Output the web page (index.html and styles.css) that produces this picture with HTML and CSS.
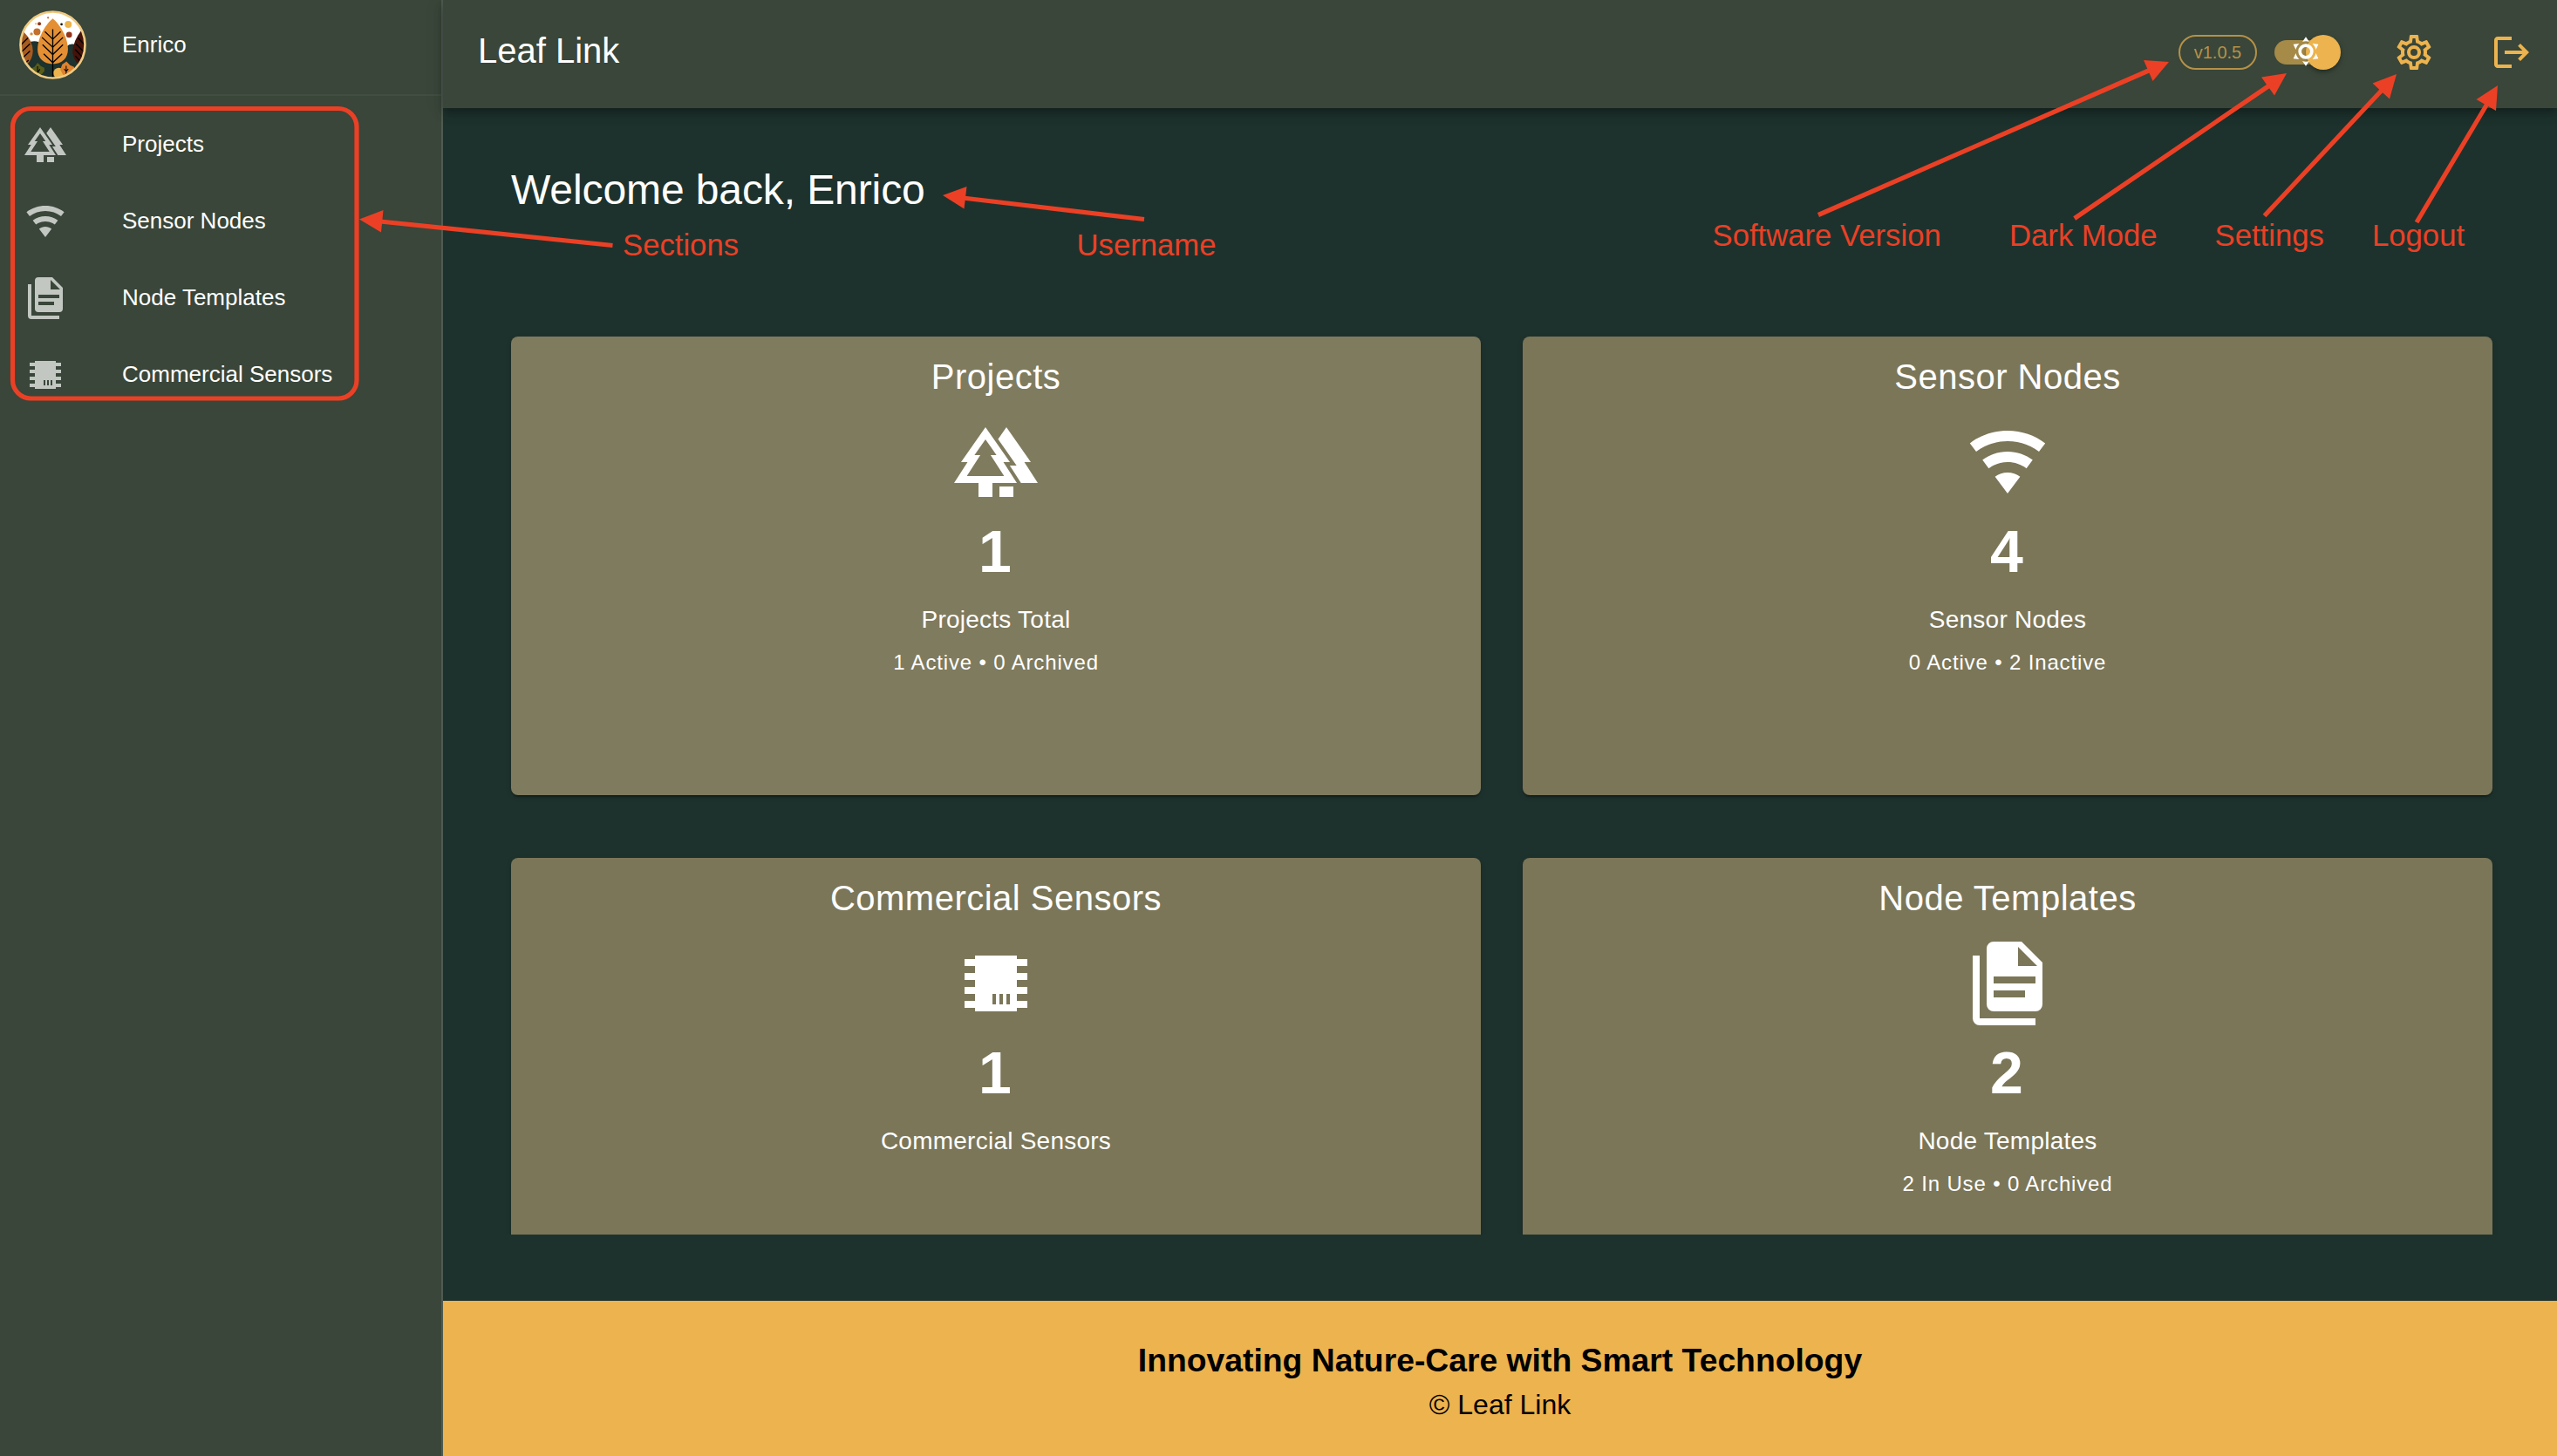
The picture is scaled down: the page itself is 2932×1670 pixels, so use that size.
FILE: index.html
```html
<!DOCTYPE html>
<html lang="en">
<head>
<meta charset="utf-8">
<title>Leaf Link</title>
<link rel="stylesheet" href="styles.css">
</head>
<body>
<svg class="defs" width="0" height="0" aria-hidden="true">
  <symbol id="forest" viewBox="0 0 24 24"><path d="M16 12 9 2 2 12h1.86L0 18h7v4h4v-4h7l-3.86-6H16zM3.66 16l3.86-6H5.84L9 5.49 12.16 10h-1.68l3.86 6H3.66z"/><path d="M20.14 12H22L15 2l-2.39 3.41L17.92 13h-1.95l3.22 5H24l-3.86-6z"/><path d="M13 19h4v3h-4z"/></symbol>
  <symbol id="wifi" viewBox="0 0 24 24"><path d="M12 21L15.6 16.2C14.6 15.45 13.35 15 12 15S9.4 15.45 8.4 16.2L12 21M12 3C7.95 3 4.21 4.34 1.2 6.6L3 9C5.5 7.12 8.62 6 12 6S18.5 7.12 21 9L22.8 6.6C19.79 4.34 16.05 3 12 3M12 9C9.3 9 6.81 9.89 4.8 11.4L6.6 13.8C8.1 12.67 9.97 12 12 12S15.9 12.67 17.4 13.8L19.2 11.4C17.19 9.89 14.7 9 12 9Z"/></symbol>
  <symbol id="docs" viewBox="0 0 24 24"><path fill-rule="evenodd" d="M8 0H16L22 6V18A2 2 0 0 1 20 20H8A2 2 0 0 1 6 18V2A2 2 0 0 1 8 0ZM15 1.5V7H20.5ZM8 10V12H20V10ZM8 14V16H17V14Z"/><path d="M2 4H4V22H20V24H4A2 2 0 0 1 2 22Z"/></symbol>
  <symbol id="chip" viewBox="0 0 24 24"><path fill-rule="evenodd" d="M6 4H18V5H21V7H18V9H21V11H18V13H21V15H18V17H21V19H18V20H6V19H3V17H6V15H3V13H6V11H3V9H6V7H3V5H6ZM11 15V18H12V15ZM13 15V18H14V15ZM15 15V18H16V15Z"/></symbol>
</svg>

<div class="app">
  <nav class="sidebar">
    <div class="user">
      <svg class="avatar" viewBox="66 35 230 238" preserveAspectRatio="none">
        <defs><clipPath id="face"><ellipse cx="181" cy="154" rx="110" ry="114"/></clipPath></defs>
        <g clip-path="url(#face)">
          <path fill="#fff" d="M66 35h230v238H66z"/>
          <path fill="#1e322e" d="M66 175Q100 130 135 145L228 160Q240 146 262 154L296 190V273H66z"/>
          <path fill="#a65b21" d="M80 107Q113 140 113 175Q112 205 92 222L60 215V107z"/>
          <path fill="#451209" d="M280 102Q248 145 249 180Q252 205 270 222L300 215V102z"/>
          <path fill="#e48f33" d="M181 63C160 80 129 125 129 170C129 200 150 220 181 220C212 220 233 200 233 170C233 125 202 80 181 63z"/>
          <path fill="#565c19" d="M129 216L140 227L152 233L153 244L144 255L129 262L112 256L106 236L119 229z"/>
          <circle cx="202" cy="252" r="19" fill="#edb34c"/>
          <path fill="#dd822e" d="M228 211L240 224L254 230L255 245L240 260L216 257L207 240L213 222z"/>
          <g fill="none" stroke="#000" stroke-width="4">
            <path d="M181 100V270"/>
            <path d="M154 108L181 134L208 108M144 128L181 162L216 128M146 153L181 187L216 153M150 185L181 215L213 185"/>
            <path d="M96 130L74 152M103 150L74 178M103 175L76 201M98 207L86 218M268 130L292 156M260 150L290 180M258 170L284 198M258 192L276 212"/>
            <path d="M129 228V256M129 250L137 238M227 226V256M220 237L227 246L234 237" stroke-width="3"/>
          </g>
          <circle cx="234" cy="83" r="12" fill="#edb34c"/><circle cx="237" cy="119" r="10" fill="#94351a"/>
          <circle cx="127" cy="109" r="12" fill="#c3702c"/><circle cx="135" cy="81" r="6" fill="#94351a"/>
          <circle cx="108" cy="116" r="5" fill="#d98a3a"/><circle cx="123" cy="81" r="3" fill="#edb34c"/>
          <circle cx="165" cy="60" r="3.5" fill="#c3702c"/><circle cx="211" cy="83" r="4" fill="#111"/>
        </g>
        <ellipse cx="181" cy="154" rx="110.5" ry="114.5" fill="none" stroke="#efca81" stroke-width="8"/>
      </svg>
      <span>Enrico</span>
    </div>
    <ul class="menu">
      <li><svg><use href="#forest"/></svg><span>Projects</span></li>
      <li><svg><use href="#wifi"/></svg><span>Sensor Nodes</span></li>
      <li><svg><use href="#docs"/></svg><span>Node Templates</span></li>
      <li><svg><use href="#chip"/></svg><span>Commercial Sensors</span></li>
    </ul>
  </nav>

  <div class="page">
    <header class="topbar">
      <h1>Leaf Link</h1>
      <div class="actions">
        <span class="version">v1.0.5</span>
        <span class="switch">
          <span class="thumb"></span>
          <svg class="sun" viewBox="0 0 24 24"><path fill-rule="evenodd" d="M12 6.8A5.2 5.2 0 0 1 12 17.2A5.2 5.2 0 0 1 12 6.8M12 9A3 3 0 0 0 12 15A3 3 0 0 0 12 9"/><path d="M12,2L14.39,5.42C13.65,5.15 12.84,5 12,5C11.16,5 10.35,5.15 9.61,5.42L12,2M3.34,7L7.5,6.65C6.9,7.16 6.36,7.78 5.94,8.5C5.5,9.24 5.25,10 5.11,10.79L3.34,7M3.36,17L5.12,13.23C5.26,14 5.53,14.78 5.95,15.5C6.37,16.24 6.91,16.86 7.5,17.37L3.36,17M20.65,7L18.88,10.79C18.74,10 18.47,9.23 18.05,8.5C17.63,7.78 17.1,7.15 16.5,6.64L20.65,7M20.64,17L16.5,17.36C17.09,16.85 17.62,16.22 18.04,15.5C18.46,14.77 18.73,14 18.87,13.21L20.64,17M12,22L9.59,18.56C10.33,18.83 11.14,19 12,19C12.82,19 13.63,18.83 14.37,18.56L12,22Z"/></svg>
        </span>
        <svg class="icon gear" viewBox="0 0 24 24"><path d="M12,8A4,4 0 0,1 16,12A4,4 0 0,1 12,16A4,4 0 0,1 8,12A4,4 0 0,1 12,8M12,10A2,2 0 0,0 10,12A2,2 0 0,0 12,14A2,2 0 0,0 14,12A2,2 0 0,0 12,10M10,22C9.75,22 9.54,21.82 9.5,21.58L9.13,18.93C8.5,18.68 7.96,18.34 7.44,17.94L4.95,18.95C4.73,19.03 4.46,18.95 4.34,18.73L2.34,15.27C2.21,15.05 2.27,14.78 2.46,14.63L4.57,12.97L4.5,12L4.57,11L2.46,9.37C2.27,9.22 2.21,8.95 2.34,8.73L4.34,5.27C4.46,5.05 4.73,4.96 4.95,5.05L7.44,6.05C7.96,5.66 8.5,5.32 9.13,5.07L9.5,2.42C9.54,2.18 9.75,2 10,2H14C14.25,2 14.46,2.18 14.5,2.42L14.87,5.07C15.5,5.32 16.04,5.66 16.56,6.05L19.05,5.05C19.27,4.96 19.54,5.05 19.66,5.27L21.66,8.73C21.79,8.95 21.73,9.22 21.54,9.37L19.43,11L19.5,12L19.43,13L21.54,14.63C21.73,14.78 21.79,15.05 21.66,15.27L19.66,18.73C19.54,18.95 19.27,19.04 19.05,18.95L16.56,17.95C16.04,18.34 15.5,18.68 14.87,18.93L14.5,21.58C14.46,21.82 14.25,22 14,22H10M11.25,4L10.88,6.61C9.68,6.86 8.62,7.5 7.85,8.39L5.44,7.35L4.69,8.65L6.8,10.2C6.4,11.37 6.4,12.64 6.8,13.8L4.68,15.36L5.43,16.66L7.86,15.62C8.63,16.5 9.68,17.14 10.87,17.38L11.24,20H12.76L13.13,17.39C14.32,17.14 15.37,16.5 16.14,15.62L18.57,16.66L19.32,15.36L17.2,13.81C17.6,12.64 17.6,11.37 17.2,10.2L19.31,8.65L18.56,7.35L16.15,8.39C15.38,7.5 14.32,6.86 13.12,6.62L12.75,4H11.25Z"/></svg>
        <svg class="icon logout" viewBox="0 0 24 24"><path d="M17 7l-1.41 1.41L18.17 11H8v2h10.17l-2.58 2.58L17 17l5-5M4 5h8V3H4c-1.1 0-2 .9-2 2v14c0 1.1.9 2 2 2h8v-2H4V5z"/></svg>
      </div>
    </header>

    <main class="content">
      <h2>Welcome back, Enrico</h2>
      <section class="cards">
        <article class="card active">
          <h3>Projects</h3><svg><use href="#forest"/></svg>
          <strong>1</strong><p>Projects Total</p><small>1 Active • 0 Archived</small>
        </article>
        <article class="card">
          <h3>Sensor Nodes</h3><svg><use href="#wifi"/></svg>
          <strong>4</strong><p>Sensor Nodes</p><small>0 Active • 2 Inactive</small>
        </article>
        <article class="card">
          <h3>Commercial Sensors</h3><svg><use href="#chip"/></svg>
          <strong>1</strong><p>Commercial Sensors</p>
        </article>
        <article class="card">
          <h3>Node Templates</h3><svg><use href="#docs"/></svg>
          <strong>2</strong><p>Node Templates</p><small>2 In Use • 0 Archived</small>
        </article>
      </section>
    </main>

    <footer class="footer">
      <b>Innovating Nature-Care with Smart Technology</b>
      <span>© Leaf Link</span>
    </footer>
  </div>
</div>

<!-- Callouts drawn over the interface -->
<svg class="callouts" viewBox="0 0 2932 1670">
  <rect x="14.5" y="124.5" width="394.5" height="332.5" rx="21"/>
  <path class="line" d="M702.5 281.5L436 254M1312 251.5L1104 227M2085 246.5L2466 80M2378.7 250.5L2603 97.5M2596.5 247.5L2732 102.5M2771 255L2852 119"/>
  <path class="head" d="M412 251.5L439.5 241L437 266.5ZM1081 224L1108.5 214L1105.5 239.5ZM2487 71L2458 69L2468.5 93ZM2622 84L2593 88.5L2608 109.5ZM2748 85L2720.5 95.5L2740 113.5ZM2864 98L2839.5 114L2862 127Z"/>
  <text x="714" y="292.5">Sections</text>
  <text x="1234.5" y="292.5">Username</text>
  <text x="1963.5" y="282">Software Version</text>
  <text x="2304" y="282">Dark Mode</text>
  <text x="2539.500" y="282">Settings</text>
  <text x="2720" y="281.500">Logout</text>
</svg>
</body>
</html>
```

FILE: styles.css
```css
* { box-sizing: border-box; }

body {
  margin: 0;
  background: #1e322d;
  color: #fff;
  font-family: "Liberation Sans", Arial, Helvetica, sans-serif;
}

h1, h2, h3, p, ul { margin: 0; padding: 0; font-weight: 400; }

.defs { position: absolute; }

.app { display: flex; width: 2932px; height: 1670px; overflow: hidden; }

/* Sidebar */
.sidebar {
  flex: none;
  width: 508px;
  background: #394639;
  border-right: 2px solid #4f5b51;
  font-size: 26px;
}
.user {
  display: flex;
  align-items: center;
  height: 110px;
  padding: 0 0 6px 22px;
  border-bottom: 2px solid #434e43;
}
.avatar { width: 77px; height: 79px; margin-right: 41px; }
.menu { padding-top: 12px; list-style: none; }
.menu li { display: flex; align-items: center; height: 88px; padding-left: 28px; }
.menu svg { width: 48px; height: 48px; margin-right: 64px; fill: #c2c7c2; }
.menu span { padding-bottom: 2px; }

/* Top bar */
.page { flex: 1; display: flex; flex-direction: column; min-width: 0; }
.topbar {
  position: relative;
  flex: none;
  display: flex;
  justify-content: space-between;
  height: 124px;
  padding: 0 28px 0 40px;
  background: #394639;
  box-shadow: 0 4px 8px -2px rgba(0, 0, 0, .2), 0 8px 10px rgba(0, 0, 0, .14), 0 2px 20px rgba(0, 0, 0, .12);
}
.topbar h1 { font-size: 40px; line-height: 117px; }
.actions { display: flex; align-items: center; height: 120px; }
.version {
  width: 90px;
  height: 40px;
  border: 2px solid #b69148;
  border-radius: 20px;
  color: #b69148;
  font-size: 20px;
  line-height: 37px;
  text-align: center;
}
.switch {
  position: relative;
  width: 68px;
  height: 28px;
  margin-left: 20px;
  border-radius: 14px;
  background: #a58a48;
}
.thumb {
  position: absolute;
  left: 36px;
  top: -6px;
  width: 40px;
  height: 40px;
  border-radius: 50%;
  background: #ecb34f;
  box-shadow: 0 4px 4px -2px rgba(0, 0, 0, .2), 0 2px 4px rgba(0, 0, 0, .14), 0 2px 10px rgba(0, 0, 0, .12);
}
.sun { position: absolute; left: 16px; top: -7px; width: 40px; height: 40px; fill: #fff; }
.icon { width: 48px; height: 48px; fill: #ecb34f; }
.gear { margin-left: 68px; }
.logout { margin-left: 64px; }

/* Dashboard */
.content { flex: none; height: 1292px; padding: 58px 44px 0 48px; overflow: hidden; }
.content h2 {
  height: 184px;
  padding-left: 30px;
  font-size: 48px;
  line-height: 72px;
  letter-spacing: -.1px;
}
.cards {
  display: grid;
  grid-template-columns: 1fr 1fr;
  grid-auto-rows: 526px;
  gap: 72px 48px;
  height: 1050px;
  padding: 20px 30px 0;
  overflow: hidden;
}
.card {
  display: flex;
  flex-direction: column;
  align-items: center;
  padding-top: 16px;
  border-radius: 8px;
  background: #7b7658;
  box-shadow: 0 4px 2px -2px rgba(0, 0, 0, .2), 0 2px 2px rgba(0, 0, 0, .14), 0 2px 6px rgba(0, 0, 0, .12);
}
.card.active { background: #7f7b5e; }
.card h3 { font-size: 40px; line-height: 60px; letter-spacing: .5px; }
.card svg { width: 96px; height: 96px; margin: 20px 1px 12px 0; fill: #fff; }
.card strong { padding-right: 2px; font-size: 68px; line-height: 84px; }
.card p { margin-top: 16px; font-size: 28px; line-height: 42px; letter-spacing: .24px; }
.card small { margin-top: 8px; font-size: 24px; line-height: 40px; letter-spacing: .85px; }

/* Footer */
.footer {
  flex: 1;
  display: flex;
  flex-direction: column;
  align-items: center;
  margin-top: 76px;
  padding-top: 41px;
  background: #ecb34f;
  color: #000;
}
.footer b { font-size: 37.3px; line-height: 54px; }
.footer span { font-size: 32px; line-height: 49px; }

/* Callouts */
.callouts { position: absolute; left: 0; top: 0; width: 2932px; height: 1670px; }
.callouts rect, .callouts .line { fill: none; stroke: #eb4025; stroke-width: 5.2px; }
.callouts .head, .callouts text { fill: #eb4025; }
.callouts text { font-size: 34.7px; }
```
